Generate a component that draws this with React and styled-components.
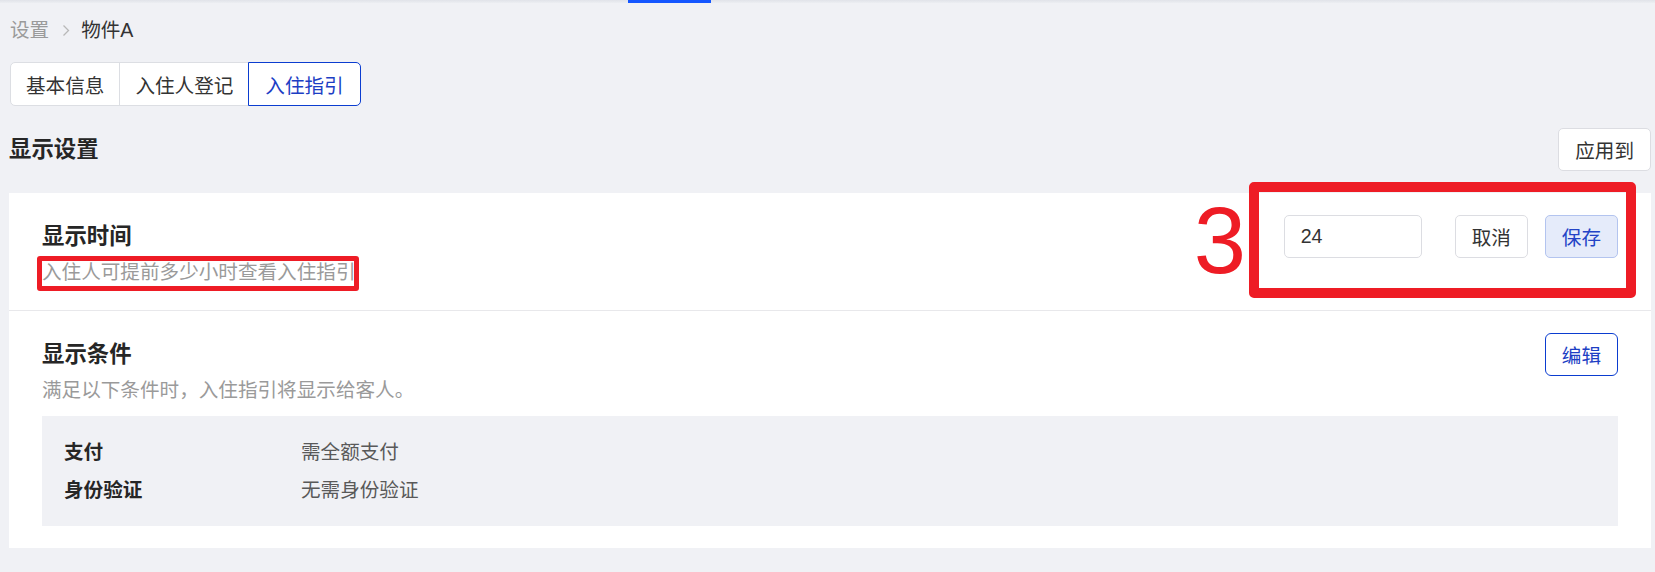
import React, { useState } from 'react'
import styled, { createGlobalStyle, css } from 'styled-components'

const GlobalStyle = createGlobalStyle`
  html, body {
      margin: 0;
      padding: 0;
      background: #f0f1f5;
      font-family: "Liberation Sans", "Noto Sans CJK SC", sans-serif;
      color: #262626;
  }
  * { box-sizing: border-box; }
`;

const tabs = ['基本信息', '入住人登记', '入住指引']

const conditions = [
  { label: '支付', value: '需全额支付' },
  { label: '身份验证', value: '无需身份验证' },
]

function Chevron() {
  return (
      <svg width="8" height="13" viewBox="0 0 8 13" fill="none">
          <path d="M1.5 1.5l5 5-5 5" stroke="#b8b8b8" strokeWidth="1.3" />
      </svg>
  )
}

function App() {
  const [active, setActive] = useState(2)
  const [hours, setHours] = useState('24')

  return (
      <Page>
          <GlobalStyle />
          <TopBar><TopIndicator /></TopBar>
          <Content>
              <Breadcrumb>
                  <Crumb $muted>设置</Crumb>
                  <Chevron />
                  <Crumb>物件A</Crumb>
              </Breadcrumb>

              <Tabs>
                  {tabs.map((t, i) => (
                      <Tab key={t} $active={i === active} onClick={() => setActive(i)}>{t}</Tab>
                  ))}
              </Tabs>

              <PageHeader>
                  <Heading>显示设置</Heading>
                  <Button>应用到</Button>
              </PageHeader>

              <Card>
                  <Section $divided>
                      <Row>
                          <Title>显示时间</Title>
                          <Controls>
                              <Marker>3</Marker>
                              <Frame />
                              <HoursInput value={hours} onChange={e => setHours(e.target.value)} />
                              <Button>取消</Button>
                              <Button $variant="primary">保存</Button>
                          </Controls>
                      </Row>
                      <Desc>
                          <Marked>
                              入住人可提前多少小时查看入住指引
                              <TextFrame />
                          </Marked>
                      </Desc>
                  </Section>

                  <Section>
                      <Row>
                          <Title>显示条件</Title>
                          <Button $variant="outline">编辑</Button>
                      </Row>
                      <Desc>满足以下条件时，入住指引将显示给客人。</Desc>
                      <InfoTable>
                          {conditions.map(c => (
                              <React.Fragment key={c.label}>
                                  <InfoLabel>{c.label}</InfoLabel>
                                  <InfoValue>{c.value}</InfoValue>
                              </React.Fragment>
                          ))}
                      </InfoTable>
                  </Section>
              </Card>
          </Content>
      </Page>
  )
}

const Page = styled.div`
  min-height: 572px;
  background: #f0f1f5;
`;

const TopBar = styled.div`
  height: 3px;
  background: linear-gradient(#e1e3e9, #eceef2);
  display: flex;
`;

const TopIndicator = styled.div`
  margin-left: 628px;
  width: 83px;
  height: 3px;
  background: #1456ff;
`;

const Content = styled.div`
  padding: 0 4px 0 9px;
`;

const Breadcrumb = styled.div`
  margin-top: 13px;
  height: 28px;
  display: flex;
  align-items: center;
  gap: 13px;
  padding-left: 1px;
  font-size: 19.6px;
  line-height: 28px;
  svg{
      margin-right: -2px;
  }
`;

const Crumb = styled.span`
  color: ${p => p.$muted ? '#9a9a9a' : '#333'};
`;

const Tabs = styled.div`
  margin-top: 18px;
  display: flex;
  height: 44px;
  padding-left: 1px;
`;

const Tab = styled.button`
  position: relative;
  font-family: inherit;
  font-size: 19.6px;
  height: 44px;
  padding: 0 15px;
  margin-left: -1px;
  background: #fff;
  border: 1px solid #dcdee3;
  color: #333;
  cursor: pointer;
  &:first-child{
      margin-left: 0;
      border-radius: 5px 0 0 5px;
  }
  &:last-child{
      border-radius: 0 5px 5px 0;
      padding: 0 16px;
  }
  ${p => p.$active && css`
      z-index: 1;
      border-color: #0b3dd0;
      color: #1c3ec4;
  `}
`;

const PageHeader = styled.div`
  margin-top: 22px;
  height: 43px;
  display: flex;
  justify-content: space-between;
  align-items: center;
`;

const Heading = styled.h2`
  margin: 0;
  font-size: 22.4px;
  line-height: 32px;
  font-weight: 700;
  color: #262626;
`;

const Button = styled.button`
  font-family: inherit;
  font-size: 19.6px;
  height: 43px;
  padding: 0 16px;
  border-radius: 5px;
  border: 1px solid #dcdde2;
  background: #fff;
  color: #333;
  cursor: pointer;
  white-space: nowrap;
  ${p => p.$variant === 'primary' && css`
      background: #e5ebfa;
      border-color: #b3c4ef;
      color: #2343c6;
  `}
  ${p => p.$variant === 'outline' && css`
      border-color: #0b3dd0;
      border-radius: 6px;
      color: #1c3ec4;
  `}
`;

const Card = styled.div`
  margin-top: 22px;
  background: #fff;
`;

const Section = styled.div`
  padding: 22px 33px ${p => p.$divided ? '24px' : '22px'};
  border-bottom: ${p => p.$divided ? '1px solid #e8e8eb' : 'none'};
`;

const Row = styled.div`
  display: flex;
  justify-content: space-between;
  align-items: center;
  min-height: 43px;
`;

const Title = styled.h3`
  margin: 0;
  font-size: 22.4px;
  line-height: 32px;
  font-weight: 700;
  color: #262626;
`;

const Controls = styled.div`
  position: relative;
  display: flex;
  align-items: center;
  gap: 17px;
`;

const Frame = styled.div`
  position: absolute;
  left: -35px;
  top: -33px;
  right: -18px;
  bottom: -40px;
  border: 10px solid #ee1c25;
  border-radius: 5px;
  pointer-events: none;
`;

const Marker = styled.span`
  position: absolute;
  left: -90px;
  top: -22px;
  font-family: "Liberation Sans", sans-serif;
  font-size: 94px;
  line-height: 95px;
  color: #ee1c25;
`;

const HoursInput = styled.input`
  width: 138px;
  height: 43px;
  margin-right: 16px;
  padding: 0 16px;
  font-family: inherit;
  font-size: 19.6px;
  color: #333;
  border: 1px solid #dcdde2;
  border-radius: 5px;
  outline: none;
  background: #fff;
`;

const Desc = styled.div`
  font-size: 19.6px;
  line-height: 28px;
  color: #9a9a9a;
`;

const Marked = styled.span`
  position: relative;
  display: inline-block;
`;

const TextFrame = styled.span`
  position: absolute;
  left: -5px;
  top: -2px;
  right: -3px;
  height: 35px;
  border: 5px solid #ee1c25;
  border-radius: 3px;
  pointer-events: none;
`;

const InfoTable = styled.div`
  margin-top: 12px;
  background: #f0f1f5;
  padding: 22px 22px;
  display: grid;
  grid-template-columns: 237px 1fr;
  row-gap: 10px;
  font-size: 19.6px;
  line-height: 28px;
`;

const InfoLabel = styled.div`
  font-weight: 700;
  color: #262626;
`;

const InfoValue = styled.div`
  color: #595959;
`;

export default App
